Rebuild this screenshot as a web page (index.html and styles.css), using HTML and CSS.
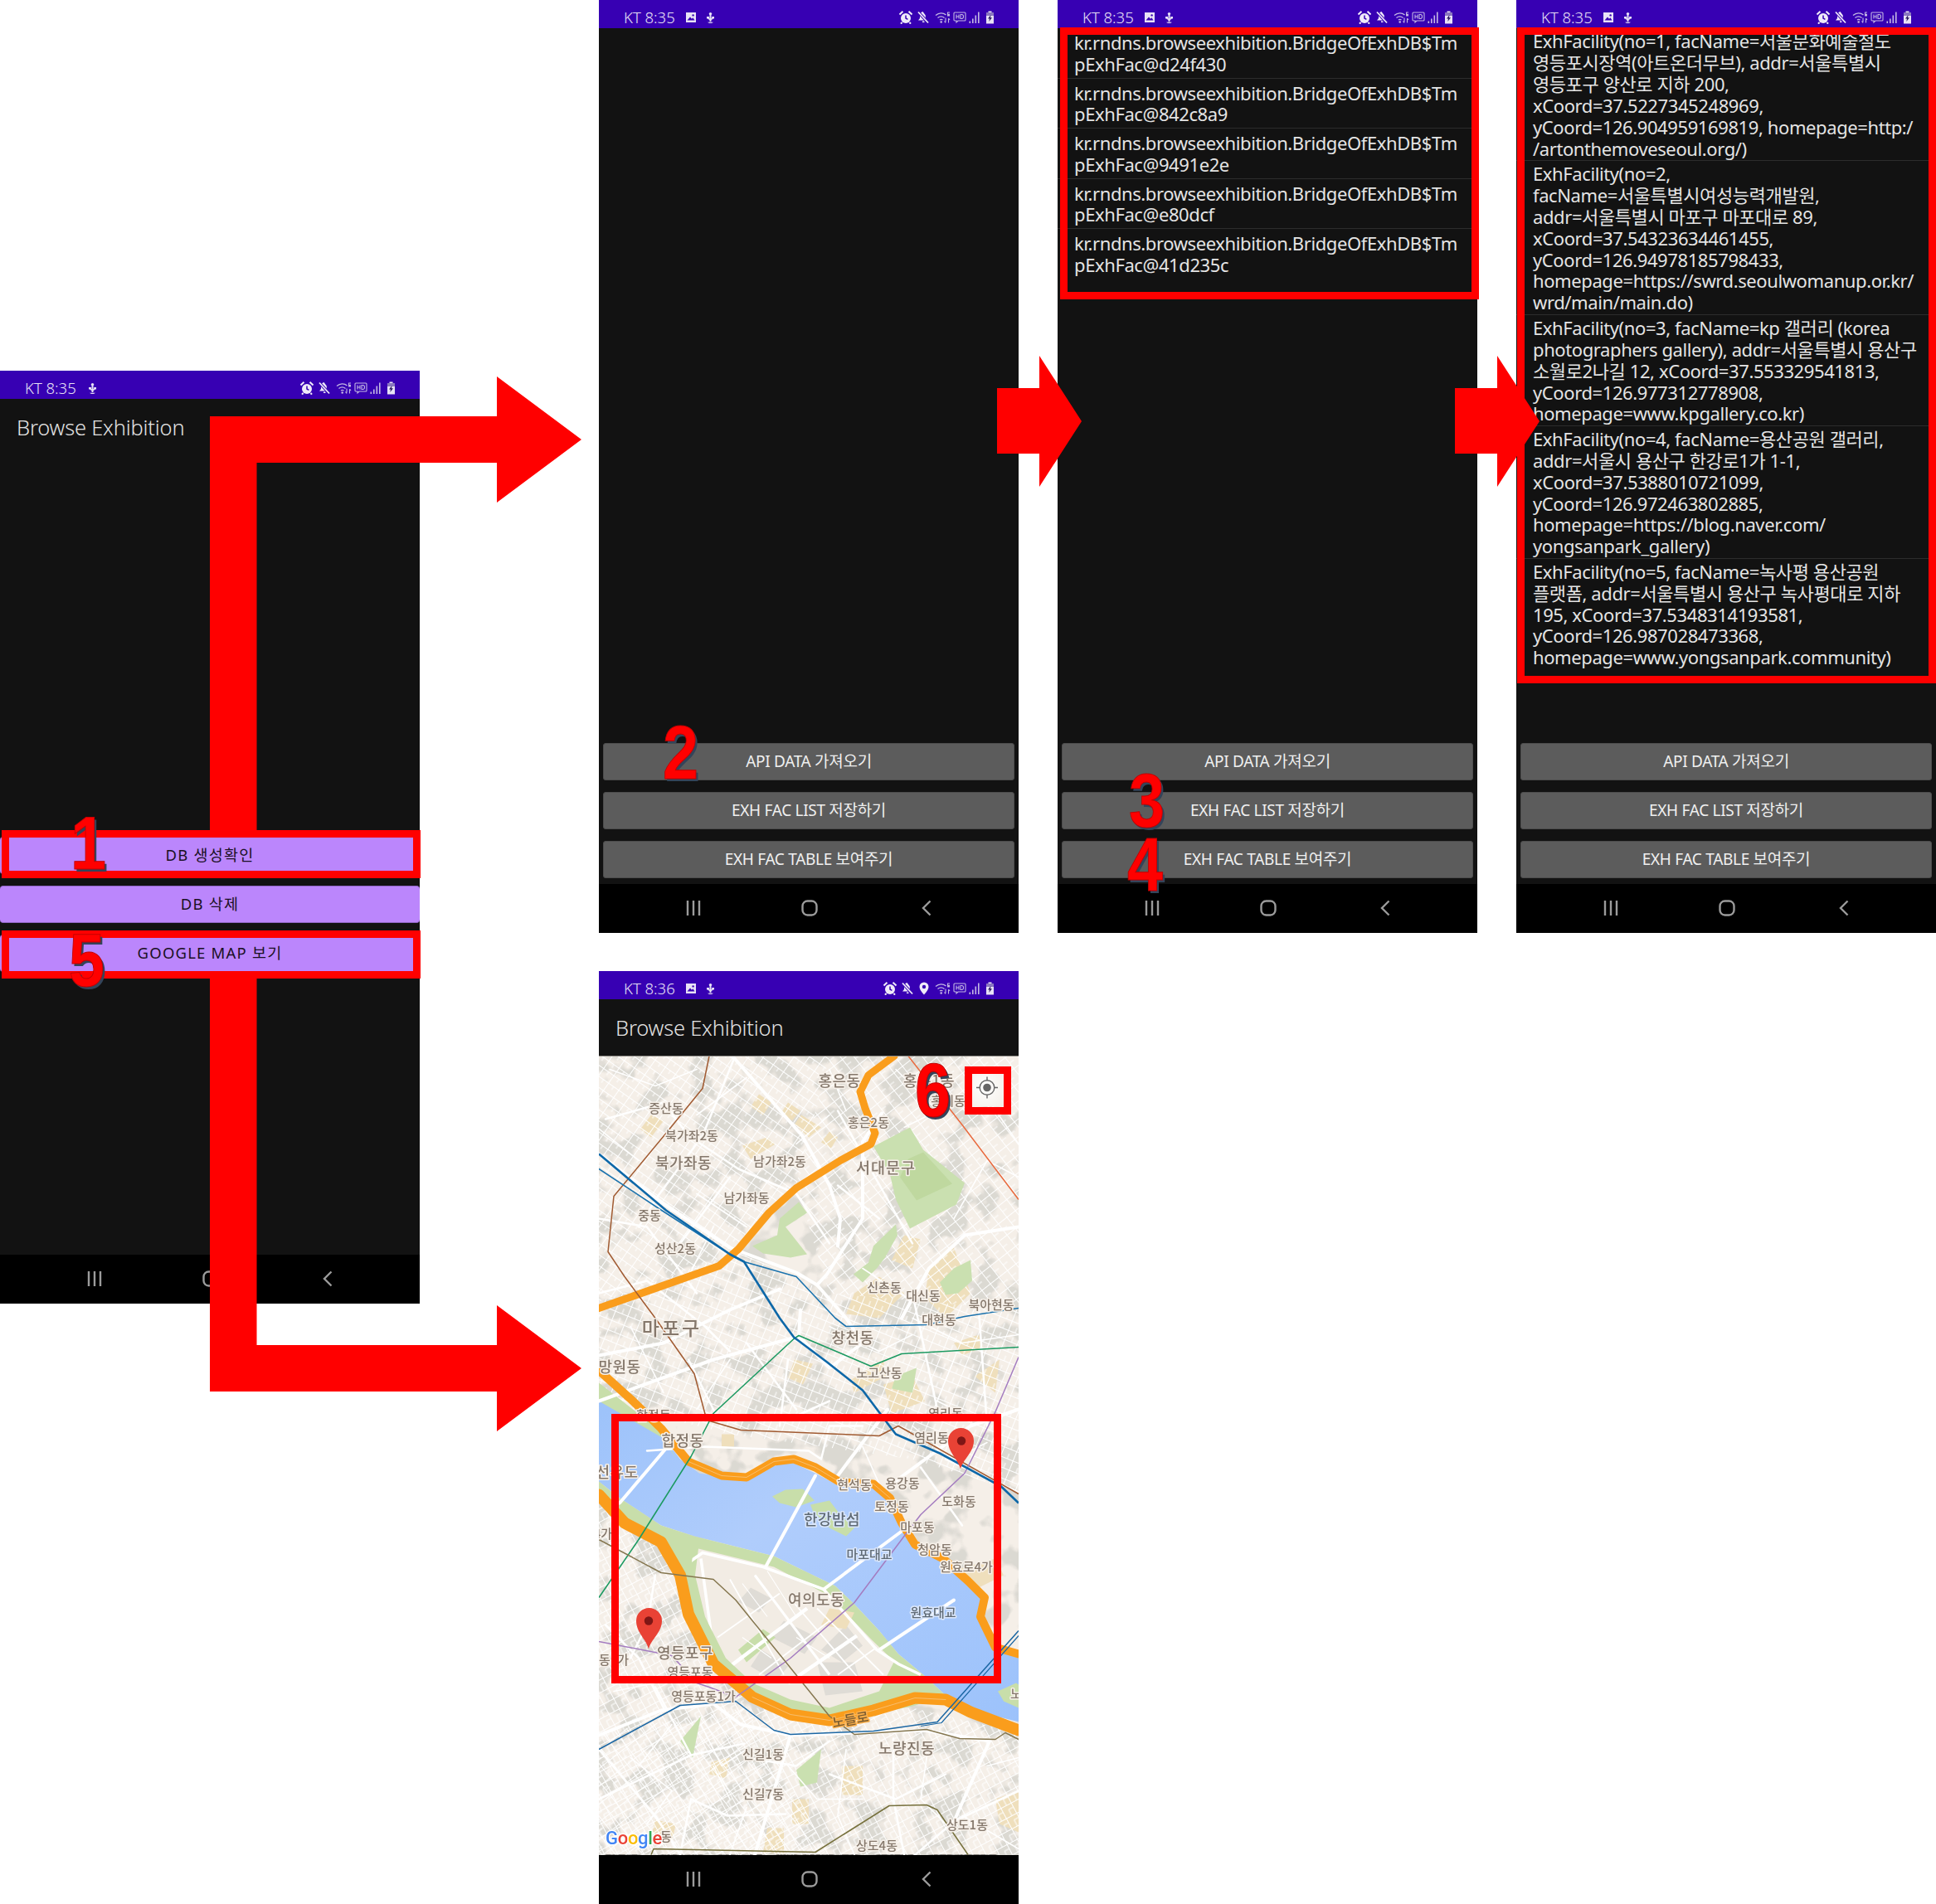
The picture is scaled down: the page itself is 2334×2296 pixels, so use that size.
FILE: index.html
```html
<!DOCTYPE html>
<html lang="ko">
<head>
<meta charset="utf-8">
<title>Browse Exhibition</title>
<link rel="stylesheet" href="styles.css">
</head>
<body>
<svg class="defs" width="0" height="0" aria-hidden="true">
  <symbol id="i-image" viewBox="0 0 14 14"><path d="M1 1h12v12H1z" fill="#e8e2f6"/><path d="M2.5 10.5 6 6.5l2 2.2 1.4-1.4 2.1 3.2z" fill="#3700b3"/><circle cx="9.6" cy="4.4" r="1.2" fill="#3700b3"/></symbol>
  <symbol id="i-usb" viewBox="0 0 13 14"><circle cx="6.5" cy="2.6" r="1.7" fill="#e8e2f6"/><path d="M5.500 3h2v9h-2z" fill="#e8e2f6"/><path d="M3.500 6.500c0 2 1.500 2.500 3 3.200 1.500-.7 3-1.200 3-3.200" fill="none" stroke="#e8e2f6" stroke-width="1.500"/><path d="M2 6h3v2.400H2zM8.200 6H11v2.400H8.200z" fill="#e8e2f6"/><path d="M3 12.800h7c-1 .9-2 1.200-3.500 1.200S4 13.700 3 12.800z" fill="#e8e2f6"/></symbol>
  <symbol id="i-alarm" viewBox="0 0 16 16"><circle cx="8" cy="9" r="6" fill="#efeaf9"/><path d="M8 5.500V9l2.400 1.400" stroke="#3700b3" stroke-width="1.500" fill="none"/><path d="M.5 4.500 4.500.8M15.500 4.500 11.500.8M3.500 14 2 15.700M12.500 14l1.500 1.700" stroke="#efeaf9" stroke-width="2"/></symbol>
  <symbol id="i-mute" viewBox="0 0 14 16"><path d="M6.500 1c-2.500.5-3.500 2.500-3.500 5v3L1 11.500h10.500L9.800 9V5.500z" fill="#efeaf9"/><path d="M6 12.500h2.500V14H6z" fill="#efeaf9"/><path d="M1 1.500 13 14.500" stroke="#3700b3" stroke-width="3.400"/><path d="M1 1.500 13 14.500" stroke="#efeaf9" stroke-width="1.800"/></symbol>
  <symbol id="i-pin" viewBox="0 0 12 16"><path d="M6 .5a5.500 5.500 0 0 0-5.500 5.500C.5 10 6 15.500 6 15.500S11.500 10 11.500 6A5.500 5.500 0 0 0 6 .5z" fill="#efeaf9"/><circle cx="6" cy="6" r="2.200" fill="#3700b3"/></symbol>
  <symbol id="i-wifi" viewBox="0 0 20 16"><g fill="none" stroke="#c4b8e4" stroke-width="1.300"><path d="M1 5.500C5 2 10 2 13.500 5"/><path d="M3.500 8.500c2.500-2 5.500-2 8 0"/><path d="M6 11c1-.8 2.500-.8 3.500 0"/></g><circle cx="7.700" cy="13.500" r="1.300" fill="#c4b8e4"/><path d="M13 8.500v5M13 14.500l-1.500-2M16.500 14.500v-5M16.500 9l1.500 2" stroke="#c4b8e4" stroke-width="1.100" fill="none"/><path d="M15 1.500h3v.9h-2v1.300h2v2.800h-3z" fill="#c4b8e4"/></symbol>
  <symbol id="i-hd" viewBox="0 0 16 16"><path d="M2 2h12a1 1 0 0 1 1 1v8a1 1 0 0 1-1 1H6l-2 2v-2H2a1 1 0 0 1-1-1V3a1 1 0 0 1 1-1z" fill="none" stroke="#c4b8e4" stroke-width="1.100"/><path d="M4 4.500v5M7 4.500v5M4 7h3M9 4.500v5h1.500c1.300 0 2-1 2-2.500s-.7-2.500-2-2.500z" fill="none" stroke="#c4b8e4" stroke-width="1.100"/></symbol>
  <symbol id="i-signal" viewBox="0 0 13 16"><path d="M.5 12.500h1.600v2.500H.5zM4 9.500h1.600V15H4zM7.500 5.500h1.600V15H7.500zM11 1.500h1.600V15H11z" fill="#c4b8e4"/></symbol>
  <symbol id="i-battery" viewBox="0 0 11 16"><path d="M3.500.5h4v1.500h2.500v13.500H1V2h2.500z" fill="#e8e2f6"/><path d="M1 2h9v4H1z" fill="#8a78c0"/><path d="M6.500 5 3 9.500h2L4.300 13l3.700-4.700H6z" fill="#2a1a60"/></symbol>
  <symbol id="i-menu" viewBox="0 0 18 20"><path d="M2 1v18M9 1v18M16 1v18" stroke="#9b9b9b" stroke-width="2.400" fill="none"/></symbol>
  <symbol id="i-home" viewBox="0 0 20 20"><rect x="1.500" y="1.500" width="17" height="17" rx="6" fill="none" stroke="#9b9b9b" stroke-width="2.400"/></symbol>
  <symbol id="i-back" viewBox="0 0 12 20"><path d="M10.500 1.500 2 10l8.500 8.500" fill="none" stroke="#9b9b9b" stroke-width="2.400"/></symbol>
</svg>

<main class="canvas">
  <section class="phone phone-main">
    <header class="status">
      <span class="clock">KT 8:35</span>
      <svg class="ic ic-usb"><use href="#i-usb"/></svg>
      <div class="status-right">
        <svg class="ic ic-alarm"><use href="#i-alarm"/></svg>
        <svg class="ic ic-mute"><use href="#i-mute"/></svg>
        <svg class="ic ic-wifi"><use href="#i-wifi"/></svg>
        <svg class="ic ic-hd"><use href="#i-hd"/></svg>
        <svg class="ic ic-signal"><use href="#i-signal"/></svg>
        <svg class="ic ic-battery"><use href="#i-battery"/></svg>
      </div>
    </header>
    <div class="appbar">Browse Exhibition</div>
    <div class="content content-main">
      <button class="btn btn-purple">DB 생성확인</button>
      <button class="btn btn-purple">DB 삭제</button>
      <button class="btn btn-purple">GOOGLE MAP 보기</button>
    </div>
    <nav class="navbar">
      <svg class="nav-ic nav-menu"><use href="#i-menu"/></svg>
      <svg class="nav-ic nav-home"><use href="#i-home"/></svg>
      <svg class="nav-ic nav-back"><use href="#i-back"/></svg>
    </nav>
  </section>

  <section class="phone">
    <header class="status">
      <span class="clock">KT 8:35</span>
      <svg class="ic ic-image"><use href="#i-image"/></svg>
      <svg class="ic ic-usb"><use href="#i-usb"/></svg>
      <div class="status-right">
        <svg class="ic ic-alarm"><use href="#i-alarm"/></svg>
        <svg class="ic ic-mute"><use href="#i-mute"/></svg>
        <svg class="ic ic-wifi"><use href="#i-wifi"/></svg>
        <svg class="ic ic-hd"><use href="#i-hd"/></svg>
        <svg class="ic ic-signal"><use href="#i-signal"/></svg>
        <svg class="ic ic-battery"><use href="#i-battery"/></svg>
      </div>
    </header>
    <div class="content content-list">
      <div class="actions">
        <button class="btn btn-grey">API DATA 가져오기</button>
        <button class="btn btn-grey">EXH FAC LIST 저장하기</button>
        <button class="btn btn-grey">EXH FAC TABLE 보여주기</button>
      </div>
    </div>
    <nav class="navbar">
      <svg class="nav-ic nav-menu"><use href="#i-menu"/></svg>
      <svg class="nav-ic nav-home"><use href="#i-home"/></svg>
      <svg class="nav-ic nav-back"><use href="#i-back"/></svg>
    </nav>
  </section>

  <section class="phone">
    <header class="status">
      <span class="clock">KT 8:35</span>
      <svg class="ic ic-image"><use href="#i-image"/></svg>
      <svg class="ic ic-usb"><use href="#i-usb"/></svg>
      <div class="status-right">
        <svg class="ic ic-alarm"><use href="#i-alarm"/></svg>
        <svg class="ic ic-mute"><use href="#i-mute"/></svg>
        <svg class="ic ic-wifi"><use href="#i-wifi"/></svg>
        <svg class="ic ic-hd"><use href="#i-hd"/></svg>
        <svg class="ic ic-signal"><use href="#i-signal"/></svg>
        <svg class="ic ic-battery"><use href="#i-battery"/></svg>
      </div>
    </header>
    <div class="content content-list">
      <ul class="rows rows-short">
        <li>kr.rndns.browseexhibition.BridgeOfExhDB$Tm<br>pExhFac@d24f430</li>
        <li>kr.rndns.browseexhibition.BridgeOfExhDB$Tm<br>pExhFac@842c8a9</li>
        <li>kr.rndns.browseexhibition.BridgeOfExhDB$Tm<br>pExhFac@9491e2e</li>
        <li>kr.rndns.browseexhibition.BridgeOfExhDB$Tm<br>pExhFac@e80dcf</li>
        <li>kr.rndns.browseexhibition.BridgeOfExhDB$Tm<br>pExhFac@41d235c</li>
      </ul>
      <div class="actions">
        <button class="btn btn-grey">API DATA 가져오기</button>
        <button class="btn btn-grey">EXH FAC LIST 저장하기</button>
        <button class="btn btn-grey">EXH FAC TABLE 보여주기</button>
      </div>
    </div>
    <nav class="navbar">
      <svg class="nav-ic nav-menu"><use href="#i-menu"/></svg>
      <svg class="nav-ic nav-home"><use href="#i-home"/></svg>
      <svg class="nav-ic nav-back"><use href="#i-back"/></svg>
    </nav>
  </section>

  <section class="phone">
    <header class="status">
      <span class="clock">KT 8:35</span>
      <svg class="ic ic-image"><use href="#i-image"/></svg>
      <svg class="ic ic-usb"><use href="#i-usb"/></svg>
      <div class="status-right">
        <svg class="ic ic-alarm"><use href="#i-alarm"/></svg>
        <svg class="ic ic-mute"><use href="#i-mute"/></svg>
        <svg class="ic ic-wifi"><use href="#i-wifi"/></svg>
        <svg class="ic ic-hd"><use href="#i-hd"/></svg>
        <svg class="ic ic-signal"><use href="#i-signal"/></svg>
        <svg class="ic ic-battery"><use href="#i-battery"/></svg>
      </div>
    </header>
    <div class="content content-list">
      <ul class="rows rows-long">
        <li>ExhFacility(no=1, facName=서울문화예술철도<br>영등포시장역(아트온더무브), addr=서울특별시<br>영등포구 양산로 지하 200,<br>xCoord=37.5227345248969,<br>yCoord=126.904959169819, homepage=http:/<br>/artonthemoveseoul.org/)</li>
        <li>ExhFacility(no=2,<br>facName=서울특별시여성능력개발원,<br>addr=서울특별시 마포구 마포대로 89,<br>xCoord=37.54323634461455,<br>yCoord=126.94978185798433,<br>homepage=https://swrd.seoulwomanup.or.kr/<br>wrd/main/main.do)</li>
        <li>ExhFacility(no=3, facName=kp 갤러리 (korea<br>photographers gallery), addr=서울특별시 용산구<br>소월로2나길 12, xCoord=37.553329541813,<br>yCoord=126.977312778908,<br>homepage=www.kpgallery.co.kr)</li>
        <li>ExhFacility(no=4, facName=용산공원 갤러리,<br>addr=서울시 용산구 한강로1가 1-1,<br>xCoord=37.5388010721099,<br>yCoord=126.972463802885,<br>homepage=https://blog.naver.com/<br>yongsanpark_gallery)</li>
        <li>ExhFacility(no=5, facName=녹사평 용산공원<br>플랫폼, addr=서울특별시 용산구 녹사평대로 지하<br>195, xCoord=37.5348314193581,<br>yCoord=126.987028473368,<br>homepage=www.yongsanpark.community)</li>
      </ul>
      <div class="actions">
        <button class="btn btn-grey">API DATA 가져오기</button>
        <button class="btn btn-grey">EXH FAC LIST 저장하기</button>
        <button class="btn btn-grey">EXH FAC TABLE 보여주기</button>
      </div>
    </div>
    <nav class="navbar">
      <svg class="nav-ic nav-menu"><use href="#i-menu"/></svg>
      <svg class="nav-ic nav-home"><use href="#i-home"/></svg>
      <svg class="nav-ic nav-back"><use href="#i-back"/></svg>
    </nav>
  </section>

  <section class="phone phone-map">
    <header class="status">
      <span class="clock">KT 8:36</span>
      <svg class="ic ic-image"><use href="#i-image"/></svg>
      <svg class="ic ic-usb"><use href="#i-usb"/></svg>
      <div class="status-right">
        <svg class="ic ic-alarm"><use href="#i-alarm"/></svg>
        <svg class="ic ic-mute"><use href="#i-mute"/></svg>
        <svg class="ic ic-pin"><use href="#i-pin"/></svg>
        <svg class="ic ic-wifi"><use href="#i-wifi"/></svg>
        <svg class="ic ic-hd"><use href="#i-hd"/></svg>
        <svg class="ic ic-signal"><use href="#i-signal"/></svg>
        <svg class="ic ic-battery"><use href="#i-battery"/></svg>
      </div>
    </header>
    <div class="appbar appbar-map">Browse Exhibition</div>
    <svg class="map" viewBox="722 1274 506 963" xmlns="http://www.w3.org/2000/svg">
      <defs>
        <pattern id="st1" width="15" height="11" patternUnits="userSpaceOnUse" patternTransform="rotate(35)">
          <path d="M0 .5H15M.5 0V11M8 0V5" stroke="#fff" stroke-width="1" fill="none"/>
        </pattern>
        <pattern id="st2" width="13" height="17" patternUnits="userSpaceOnUse" patternTransform="rotate(-38)">
          <path d="M0 .5H13M.5 0V17M0 9H7" stroke="#fff" stroke-width="1" fill="none"/>
        </pattern>
        <pattern id="st3" width="16" height="12" patternUnits="userSpaceOnUse" patternTransform="rotate(22)">
          <path d="M0 .5H16M.5 0V12M9 6V12" stroke="#fff" stroke-width="1" fill="none"/>
        </pattern>
        <pattern id="st4" width="14" height="14" patternUnits="userSpaceOnUse" patternTransform="rotate(62)">
          <path d="M0 .5H14M.5 0V14M6 0V7H14" stroke="#fff" stroke-width="1" fill="none"/>
        </pattern>
        <linearGradient id="water" x1="0" y1="0" x2="1" y2="1">
          <stop offset="0" stop-color="#9cc2fa"/>
          <stop offset=".4" stop-color="#b0cdfc"/>
          <stop offset="1" stop-color="#9cc2fb"/>
        </linearGradient>
        <radialGradient id="btnbg" cx=".4" cy=".4" r=".9">
          <stop offset="0" stop-color="#fff"/>
          <stop offset="1" stop-color="#f2ede6"/>
        </radialGradient>
        <filter id="urban" x="0" y="0" width="1" height="1" color-interpolation-filters="sRGB">
          <feTurbulence type="fractalNoise" baseFrequency=".03" numOctaves="3" seed="11"/>
          <feColorMatrix type="matrix" values="0 0 0 0 .86  0 0 0 0 .85  0 0 0 0 .825  9 0 0 0 -4.450"/>
        </filter>
        <filter id="soft" x="-2%" y="-2%" width="104%" height="104%"><feGaussianBlur stdDeviation=".55"/></filter>
        <clipPath id="yeouido"><path d="M838 1853 933 1877 1007 1913 1060 1967 1083 1995 1113 2020 1040 2050 1000 2060 953 2050 907 2030 875 2000 850 1950 832 1900z"/></clipPath>
      </defs>

      <g filter="url(#soft)">
      <rect x="722" y="1274" width="506" height="963" fill="#f5efe8"/>
      <rect x="722" y="1274" width="506" height="963" filter="url(#urban)"/>

      <g fill="#efdfbc">
        <path d="M785 1345 800 1352 785 1372 772 1362z"/>
        <path d="M915 1320 930 1330 920 1345 905 1335z"/>
        <path d="M950 1330 965 1340 955 1352 942 1342z"/>
        <path d="M966 1345 990 1360 975 1372 958 1356z"/>
        <path d="M1000 1365 1010 1372 1002 1385 990 1378z"/>
        <path d="M895 1382 925 1372 935 1380 905 1398z"/>
        <path d="M1090 1490 1110 1495 1100 1530 1075 1520z"/>
        <path d="M1030 1560 1060 1540 1090 1560 1060 1590 1020 1585z"/>
        <path d="M1120 1530 1150 1505 1170 1560 1140 1590 1115 1565z"/>
        <path d="M958 1640 980 1645 968 1670 950 1662z"/>
        <path d="M1065 1670 1100 1660 1115 1690 1075 1705z"/>
        <path d="M1175 1660 1205 1640 1200 1680z"/>
        <path d="M870 1730 885 1730 885 1745 870 1745z"/>
        <path d="M1025 1665 1065 1640 1068 1660 1030 1680z"/>
        <path d="M1150 1620 1180 1610 1185 1625 1160 1635z"/>
        <path d="M1130 1900 1200 1880 1210 1900 1150 1930z"/>
        <path d="M955 2170 975 2170 975 2200 955 2200z"/>
        <path d="M1015 2130 1040 2130 1040 2165 1015 2165z"/>
        <path d="M925 2205 945 2205 945 2235 920 2235z"/>
        <path d="M1200 2170 1228 2160 1228 2210 1205 2200z"/>
        <path d="M858 2125 880 2120 875 2145 855 2140z"/>
        <path d="M790 2195 815 2200 810 2220 785 2215z"/>
      </g>
      <path d="M722 1274H1000L960 1430 890 1510 722 1570z" fill="url(#st1)"/>
      <path d="M1000 1274H1228V1580L1000 1560 960 1430z" fill="url(#st2)"/>
      <path d="M722 1570 890 1510 1000 1560 1228 1580V1800L1100 1760 880 1730 722 1690z" fill="url(#st3)"/>
      <path d="M722 1800 840 1900 900 2060 1100 2060 1228 2090V2237H722z" fill="url(#st4)"/>
      <path d="M722 2090 900 2060 1000 2237H722z" fill="url(#st2)"/>

      <g fill="#cae0b0">
        <path d="M1053 1383 1097 1360 1113 1387 1163 1427 1153 1453 1097 1482 1080 1447 1073 1417z"/>
        <path d="M907 1503 937 1490 940 1470 963 1450 973 1463 947 1480 973 1513 953 1517 920 1512z"/>
        <path d="M1029 1537 1047 1523 1053 1503 1080 1477 1082 1490 1067 1517 1057 1530 1040 1547z"/>
        <path d="M1133 1547 1150 1530 1170 1520 1172 1545 1155 1560 1140 1562z"/>
        <path d="M1080 1660 1105 1650 1100 1680 1075 1675z"/>
        <path d="M820 2100 845 2070 835 2120z"/>
        <path d="M960 2135 990 2110 985 2150 965 2155z"/>
      </g>
      <path d="M1095 1398 1113 1390 1148 1428 1105 1448 1085 1420z" fill="#bfd89f"/>

      <path d="M722 1680 763 1703 797 1730 820 1760 843 1777 897 1785 927 1770 953 1763 983 1777 1013 1793 1053 1793 1073 1810 1087 1840 1103 1867 1137 1883 1167 1910 1185 1930 1183 1950 1200 1987 1228 2000 1228 2077 1170 2062 1140 2045 1113 2020 1083 1995 1060 1967 1030 1935 1007 1913 933 1877 837 1853 797 1840 747 1807 722 1787z" fill="url(#water)"/>

      <path d="M722 1787 747 1807 797 1840 837 1853 933 1877 1007 1913 1030 1935 1060 1967 1083 1995 1113 2020 1140 2045 1100 2058 1000 2078 950 2070 905 2050 862 2010 840 1960 825 1905 800 1860 750 1835 722 1812z" fill="#c8deaa"/>
      <path d="M722 1668 763 1700 797 1726 815 1760 800 1735 760 1712 722 1690z" fill="#c8deaa"/>
      <path d="M842 1868 933 1890 1000 1925 1050 1977 1078 2004 1060 2040 1000 2060 953 2050 907 2030 875 2000 850 1950 838 1900z" fill="#f2ece4"/>
      <g clip-path="url(#yeouido)">
        <path d="M905 1915 930 1928 915 1945 890 1932z M945 1955 985 1975 970 1995 930 1975z M918 1990 950 2010 935 2028 905 2010z M985 2005 1030 2005 1040 2040 995 2045z M1020 1960 1040 1985 1015 2005 990 1990z" fill="#dfdcd6"/>
        <path d="M890 1990 920 1965 935 1975 900 2005z" fill="#c8deaa"/>
        <path d="M1000 1940 1030 1945 1020 1965 990 1960z" fill="#efdfbc"/>
        <g stroke="#fff" fill="none">
          <path d="M973 1940 880 2010M1033 1973 950 2030" stroke-width="4.500"/>
          <path d="M827 1887 847 1873 920 1890 993 1917 1057 1990 1083 2007 1110 2020M845 1880 860 1990 880 2020" stroke-width="3.500"/>
          <path d="M910 1900 1000 2020" stroke-width="3"/>
          <path d="M880 1905 945 2020M950 1925 1040 2030M985 1940 1065 2020M1000 1955 915 2020M940 1922 865 1975M1057 1987 1010 2020" stroke-width="1.800"/>
          <path d="M895 1910 925 1950M925 1895 960 1950M960 1975 1000 2000M895 1975 930 2000" stroke-width="1.100"/>
        </g>
      </g>

      <g fill="#c8deaa">
        <path d="M931 1805 947 1797 968 1796 982 1810 960 1818 940 1813z"/>
        <path d="M977 1815 1000 1810 1013 1827 1030 1843 1020 1853 1000 1843 980 1823z"/>
        <path d="M1203 2040 1225 2030 1228 2032 1228 2060 1210 2052z"/>
      </g>

      <g fill="none" stroke="#fff" stroke-linecap="round" stroke-linejoin="round">
        <g stroke-width="4">
          <path d="M722 1392 800 1452 880 1505 960 1535 985 1550 1020 1590 1040 1620"/>
          <path d="M883 1274 967 1370 1000 1430 1013 1470 1010 1503"/>
          <path d="M1063 1343 1040 1377 1040 1470 997 1537 985 1550"/>
          <path d="M1228 1480 1163 1490 1120 1530 1087 1590"/>
          <path d="M965 1580 963 1612 1000 1650 1040 1620"/>
          <path d="M722 1690 860 1640 963 1612"/>
          <path d="M722 1635 800 1620 880 1580 940 1555"/>
          <path d="M803 1747 747 1813"/>
          <path d="M983 1780 923 1890"/>
          <path d="M1087 1847 993 1917"/>
          <path d="M1150 1930 1060 1990"/>
          <path d="M722 2093 797 2063 860 2055 893 2080 953 2093 1113 2087 1193 2100"/>
          <path d="M953 2093 910 2237"/>
          <path d="M1193 2100 1150 2197"/>
          <path d="M1070 1700 1010 1780"/>
          <path d="M1075 1790 1170 1720 1228 1700"/>
        </g>
        <g stroke-width="2.500">
          <path d="M885 1277 847 1370 793 1443 770 1480"/>
          <path d="M730 1350 800 1330 830 1370 890 1410 960 1440 1000 1500"/>
          <path d="M722 1470 780 1480 840 1560"/>
          <path d="M722 1560 780 1545 850 1600 880 1630"/>
          <path d="M1077 2097 1077 2170 1090 2237"/>
          <path d="M722 2170 833 2117 897 2103"/>
          <path d="M833 2170 877 2190 947 2188"/>
          <path d="M722 2110 790 2190 820 2237"/>
          <path d="M833 2170 820 2237"/>
          <path d="M833 2117 790 2035"/>
          <path d="M760 2000 780 1960 790 1900"/>
          <path d="M800 2060 770 2000 730 1960"/>
          <path d="M1010 1340 1100 1500"/>
          <path d="M1100 1560 1130 1700"/>
          <path d="M1180 1580 1190 1720"/>
          <path d="M950 1640 940 1720"/>
          <path d="M1000 2140 1080 2170 1140 2140"/>
          <path d="M900 2120 960 2130 1000 2100"/>
          <path d="M1228 2160 1150 2197 1100 2240"/>
          <path d="M1010 1430 1060 1470"/>
          <path d="M880 1420 820 1500"/>
          <path d="M830 1640 870 1720"/>
          <path d="M900 1620 960 1700"/>
          <path d="M1110 1770 1160 1840"/>
          <path d="M1140 1760 1228 1800"/>
          <path d="M780 1750 850 1745 975 1750 990 1760 1000 1720 1040 1720"/>
          <path d="M852 1713 960 1708 1000 1690"/>
        </g>
        <g stroke-width="1.600">
          <path d="M735 1290 790 1310 840 1290M770 1400 720 1360M840 1440 900 1480M860 1480 830 1540"/>
          <path d="M1080 1290 1130 1340 1090 1360M1180 1310 1228 1380M1150 1470 1190 1400 1228 1420"/>
          <path d="M1040 1530 1100 1570M1100 1590 1160 1620 1228 1610M1000 1600 1060 1630 1100 1610"/>
          <path d="M760 1600 800 1680M880 1640 840 1700M1150 1640 1130 1690 1170 1710"/>
          <path d="M1100 1720 1150 1760 1190 1740M1040 1745 1060 1790"/>
          <path d="M1000 1290 1020 1340M960 1380 1000 1345M900 1300 840 1345"/>
          <path d="M760 2120 810 2160 780 2200M860 2130 880 2170M900 2180 880 2237M950 2130 985 2170 1040 2170"/>
          <path d="M1020 2110 1010 2190 1030 2237M1120 2100 1110 2170 1140 2200M1190 2130 1228 2120M1160 2190 1228 2230"/>
          <path d="M810 2080 770 2130M845 2080 870 2130 900 2110M740 2040 790 2030"/>
        </g>
      </g>

      <g fill="none" stroke-linecap="round" stroke-linejoin="round">
        <path d="M722 1578 867 1527 890 1507 927 1463 960 1433 1013 1400 1050 1380 1055 1367 1043 1337 1037 1317 1047 1297 1078 1274" stroke="#fa9d1c" stroke-width="9"/>
        <path d="M722 1653 763 1690 797 1723 830 1763 870 1780 900 1782 933 1763 957 1760 983 1770 1013 1788 1053 1790 1073 1807 1087 1837 1103 1863 1137 1880 1167 1907 1187 1927 1182 1950 1200 1987 1228 1995" stroke="#fa9d1c" stroke-width="10"/>
        <path d="M830 1763 870 1780 900 1782 933 1763 957 1760 983 1770 1013 1788 1053 1790 1073 1807" stroke="#f7c580" stroke-width=".8"/>
        <path d="M722 1803 753 1837 797 1860 820 1900 830 1947 860 2007 907 2047 953 2068 1000 2075 1053 2063 1103 2048 1140 2050 1170 2065 1228 2087" stroke="#fa9d1c" stroke-width="14"/>
        <path d="M907 2047 953 2068 1000 2075 1053 2063 1103 2048 1140 2050" stroke="#f7c580" stroke-width=".8"/>
      </g>

      <g fill="none" stroke-linejoin="round">
        <path d="M1095 1274 1160 1357 1228 1447" stroke="#e86a3e" stroke-width="1.500"/>
        <path d="M1228 1625 1087 1633 1050 1648 963 1611 957 1615 860 1705 833 1757 770 1857 722 1927" stroke="#1d9a62" stroke-width="1.600"/>
        <path d="M855 1274 847 1313 803 1367 740 1443 733 1510 753 1540 790 1590 837 1657 852 1713 893 1725 1060 1732 1083 1720 1228 1802" stroke="#a05a30" stroke-width="1.500"/>
        <path d="M1228 1637 1200 1703 1163 1777 1110 1827 1090 1853 1030 1933 953 2000 887 2047 855 2035 840 2030 810 1997 722 1980" stroke="#a47cc0" stroke-width="1.500"/>
        <path d="M722 1857 797 1897 860 1905 887 1930 1000 2070 1030 2092 1117 2086 1157 2097 1200 2098 1212 2090 1228 2098" stroke="#85764f" stroke-width="1.500"/>
        <path d="M785 2237 788 2230 983 2234 1072 2178 1117 2177 1130 2183 1167 2237" stroke="#76703c" stroke-width="1.500"/>
        <path d="M722 2110 820 2057 887 2052 933 2087 953 2092 1053 2088 1130 2077 1228 1967" stroke="#1a66a3" stroke-width="1.500"/>
        <path d="M1110 2082 1135 2078 1228 1973" stroke="#1a66a3" stroke-width="1.200"/>
        <path d="M722 1410 793 1457 883 1515 897 1522 960 1540 1007 1590 1020 1600 1117 1598 1163 1588 1228 1578" stroke="#1a72ad" stroke-width="1.600"/>
        <path d="M722 1392 803 1460 880 1513 897 1522 940 1590 957 1613 997 1643 1040 1677 1067 1713 1080 1730 1133 1753 1207 1793 1228 1813" stroke="#0f67a8" stroke-width="2.600"/>
      </g>

      <g class="labels">
        <text class="lb lb-m" x="1012" y="1310">홍은동</text>
        <text class="lb lb-m" x="1120" y="1310">홍은1동</text>
        <text class="lb" x="1143" y="1333">홍제동</text>
        <text class="lb" x="803" y="1342">증산동</text>
        <text class="lb" x="834" y="1375">북가좌2동</text>
        <text class="lb lb-m" x="824" y="1409">북가좌동</text>
        <text class="lb" x="940" y="1406">남가좌2동</text>
        <text class="lb" x="900" y="1450">남가좌동</text>
        <text class="lb" x="1047" y="1359">홍은2동</text>
        <text class="lb lb-l" x="1068" y="1415">서대문구</text>
        <text class="lb" x="783" y="1471">중동</text>
        <text class="lb" x="814" y="1511">성산2동</text>
        <text class="lb" x="1066" y="1558">신촌동</text>
        <text class="lb" x="1113" y="1568">대신동</text>
        <text class="lb" x="1195" y="1579">북아현동</text>
        <text class="lb" x="1132" y="1597">대현동</text>
        <text class="lb lb-xl" x="810" y="1610">마포구</text>
        <text class="lb lb-m" x="1028" y="1620">창천동</text>
        <text class="lb lb-m" x="747" y="1655">망원동</text>
        <text class="lb" x="1060" y="1661">노고산동</text>
        <text class="lb" x="788" y="1712">합정동</text>
        <text class="lb" x="1140" y="1710">염리동</text>
        <text class="lb lb-m" x="823" y="1744">합정동</text>
        <text class="lb" x="1123" y="1739">염리동</text>
        <text class="lb lb-m" x="744" y="1782">선유도</text>
        <text class="lb" x="1030" y="1796">현석동</text>
        <text class="lb" x="1088" y="1794">용강동</text>
        <text class="lb" x="1156" y="1816">도화동</text>
        <text class="lb" x="1075" y="1822">토정동</text>
        <text class="lb lb-m lb-dark" x="1003" y="1839">한강밤섬</text>
        <text class="lb" x="1106" y="1847">마포동</text>
        <text class="lb lb-dark" x="1048" y="1880">마포대교</text>
        <text class="lb" x="1127" y="1874">청암동</text>
        <text class="lb" x="1165" y="1895">원효로4가</text>
        <text class="lb" x="727" y="1855">4가</text>
        <text class="lb lb-m" x="984" y="1936">여의도동</text>
        <text class="lb lb-dark" x="1125" y="1950">원효대교</text>
        <text class="lb lb-m" x="826" y="2000">영등포구</text>
        <text class="lb" x="832" y="2022">영등포동</text>
        <text class="lb" x="848" y="2051">영등포동1가</text>
        <text class="lb" x="740" y="2007">동1가</text>
        <text class="lb lb-road" x="1025" y="2080" transform="rotate(-10 1025 2073)">노들로</text>
        <text class="lb lb-m" x="1093" y="2115">노량진동</text>
        <text class="lb" x="920" y="2121">신길1동</text>
        <text class="lb" x="920" y="2169">신길7동</text>
        <text class="lb" x="1166" y="2206">상도1동</text>
        <text class="lb" x="1057" y="2231">상도4동</text>
        <text class="lb lb-start" x="1218" y="2048">노들섬</text>
        <text class="lb" x="803" y="2220">동</text>
      </g>

      <g>
        <path d="M1158 1772c-3-12-15-20-15-34a15.500 15.500 0 0 1 31 0c0 14-13 22-16 34z" fill="#e94235"/>
        <circle cx="1159" cy="1738" r="5.200" fill="#7e1412"/>
        <path d="M782 1989c-3-12-15-20-15-34a15.500 15.500 0 0 1 31 0c0 14-13 22-16 34z" fill="#e94235"/>
        <circle cx="782" cy="1955" r="5.200" fill="#7e1412"/>
      </g>

      <text class="google" x="730" y="2224"><tspan fill="#4285f4">G</tspan><tspan fill="#ea4335">o</tspan><tspan fill="#fbbc05">o</tspan><tspan fill="#4285f4">g</tspan><tspan fill="#34a853">l</tspan><tspan fill="#ea4335">e</tspan></text>

      <rect x="1172" y="1295" width="38" height="40" fill="url(#btnbg)"/>
      <g>
        <circle cx="1190" cy="1312" r="4.800" fill="#666"/>
        <circle cx="1190" cy="1312" r="8.800" fill="none" stroke="#666" stroke-width="1.400"/>
        <path d="M1190 1299v4M1190 1321v4M1177 1312h4M1199 1312h4" stroke="#666" stroke-width="1.400"/>
      </g>
      </g>
    </svg>
    <nav class="navbar">
      <svg class="nav-ic nav-menu"><use href="#i-menu"/></svg>
      <svg class="nav-ic nav-home"><use href="#i-home"/></svg>
      <svg class="nav-ic nav-back"><use href="#i-back"/></svg>
    </nav>
  </section>

  <div class="overlay">
    <svg class="arrows" viewBox="0 0 2334 2296" aria-hidden="true">
      <path d="M253 1001V502H599V454L701 530 599 606V558H309.500V1001z" fill="#f00"/>
      <path d="M253 1180V1678H599V1726L701 1650 599 1574V1622H309.500V1180z" fill="#f00"/>
      <path d="M1202 468H1253V429L1304 508 1253 587V547H1202z" fill="#f00"/>
      <path d="M1754 468H1805V429L1856 508 1805 587V547H1754z" fill="#f00"/>
    </svg>
    <div class="mark mark-btn1"></div>
    <div class="mark mark-btn5"></div>
    <div class="mark mark-list3"></div>
    <div class="mark mark-list4"></div>
    <div class="mark mark-river"></div>
    <div class="mark mark-loc"></div>
    <span class="step step1">1</span>
    <span class="step step5">5</span>
    <span class="step step2">2</span>
    <span class="step step3">3</span>
    <span class="step step4">4</span>
    <span class="step step6">6</span>
  </div>
</main>
</body>
</html>
```

FILE: styles.css
```css
* { box-sizing: border-box; }
html, body { margin: 0; padding: 0; background: #fff; }
body { width: 2334px; height: 2296px; overflow: hidden; font-family: "Noto Sans", "Noto Sans CJK KR", sans-serif; }
.defs { position: absolute; }

.canvas {
  position: relative;
  width: 2334px;
  height: 2296px;
  display: grid;
  grid-template-columns: 722px 553px 553px 506px;
  grid-template-rows: 1125px 1171px;
  grid-template-areas: "a b c d" "a e . .";
  align-items: start;
}
.phone {
  width: 506px;
  height: 1125px;
  background: #121212;
  display: flex;
  flex-direction: column;
  overflow: hidden;
}
.phone:nth-child(2) { grid-area: b; }
.phone:nth-child(3) { grid-area: c; }
.phone:nth-child(4) { grid-area: d; }
.phone-main { grid-area: a; margin-top: 447px; }
.phone-map { grid-area: e; margin-top: 46px; }

.status {
  flex: 0 0 34px;
  height: 34px;
  background: #3700b3;
  display: flex;
  align-items: center;
  padding: 7px 29px 0 30px;
  color: #e8e2f6;
}
.clock {
  width: 66px;
  font-size: 18.5px;
  line-height: 27px;
  font-family: "Noto Sans", sans-serif;
  font-weight: 300;
  white-space: nowrap;
}
.ic { display: block; flex: none; }
.ic-image { width: 14px; height: 14px; margin-left: 8px; }
.ic-usb { width: 13px; height: 14px; margin-left: 10px; }
.phone-main .ic-usb { margin-left: 9px; }
.status-right { margin-left: auto; display: flex; align-items: center; }
.ic-alarm { width: 16px; height: 16px; }
.ic-mute { width: 14px; height: 16px; margin-left: 6px; }
.ic-pin { width: 12px; height: 16px; margin-left: 7px; }
.ic-wifi { width: 20px; height: 16px; margin-left: 7px; }
.ic-hd { width: 16px; height: 16px; margin-left: 2px; }
.ic-signal { width: 13px; height: 16px; margin-left: 3px; }
.ic-battery { width: 11px; height: 16px; margin-left: 7px; }

.appbar {
  flex: 0 0 68px;
  height: 68px;
  padding: 0 20px;
  display: flex;
  align-items: center;
  color: #e2e2e2;
  font-size: 25.5px;
  font-weight: 300;
  letter-spacing: -0.2px;
  white-space: nowrap;
}
.appbar-map { box-shadow: 0 1px 0 #8d8a85; position: relative; }

.content { flex: 1; min-height: 0; display: flex; flex-direction: column; }
.content-main { padding-top: 460px; gap: 14px; }
.content-list { justify-content: flex-end; }

.btn {
  display: block;
  width: 100%;
  height: 45px;
  margin: 0;
  padding: 0 0 3px;
  border-radius: 4px;
  text-align: center;
  font-family: "Noto Sans", "Noto Sans CJK KR", sans-serif;
  white-space: nowrap;
  cursor: pointer;
}
.btn-purple {
  background: #bb86fc;
  border: 0;
  border-top: 1px solid #8f66c4;
  border-bottom: 1px solid #8f66c4;
  color: #1a1024;
  font-size: 18.5px;
  letter-spacing: 1.200px;
}
.actions {
  flex: none;
  margin-top: auto;
  padding: 0 5px 7px;
  display: flex;
  flex-direction: column;
  gap: 14px;
}
.btn-grey {
  background: #5c5c5c;
  border: 1px solid #4d4d4d;
  border-radius: 3px;
  color: #efefef;
  font-size: 19px;
  letter-spacing: -0.3px;
}

.rows { list-style: none; margin: 0; padding: 0; flex: none; }
.rows li {
  padding: 0 8px 0 20px;
  color: #e4e4e4;
  font-size: 22px;
  line-height: 25.9px;
  white-space: nowrap;
  border-bottom: 1px solid #2c2c2c;
  letter-spacing: -0.4px;
}
.rows-short li { padding-top: 5px; padding-bottom: 2.700px; }
.rows-short li:last-child { border-bottom: 0; }
.rows-long li { padding-top: 3px; padding-bottom: .5px; }
.rows-long li:last-child { border-bottom: 0; }

.map { flex: 1; min-height: 0; display: block; width: 506px; height: 963px; }
.lb {
  font-family: "Noto Sans CJK KR", "Noto Sans", sans-serif;
  font-size: 15px;
  font-weight: 500;
  fill: #85786c;
  stroke: #f7f1ea;
  stroke-width: 3px;
  stroke-linejoin: round;
  paint-order: stroke;
  text-anchor: middle;
}
.lb-m { font-size: 18px; letter-spacing: .5px; }
.lb-l { font-size: 18.5px; letter-spacing: 1px; }
.lb-xl { font-size: 23px; letter-spacing: 3px; }
.lb-start { text-anchor: start; }
.lb-dark { fill: #5f6a74; stroke: #dbe7fb; }
.lb-road { font-size: 16px; fill: #7a5c30; stroke: #fbb04c; }
.google {
  font-family: "Roboto", "Liberation Sans", sans-serif;
  font-size: 22px;
  font-weight: 500;
  letter-spacing: -.3px;
  stroke: #fff;
  stroke-width: 2.500px;
  paint-order: stroke;
}

.navbar {
  flex: 0 0 59px;
  height: 59px;
  background: #000;
  display: grid;
  grid-template-columns: repeat(3, 1fr);
  align-items: center;
  justify-items: center;
  padding: 0 41px 2px 44px;
}
.nav-ic { display: block; height: 20px; }
.nav-menu { width: 18px; }
.nav-home { width: 20px; }
.nav-back { width: 12px; }

.overlay { position: absolute; inset: 0; pointer-events: none; }
.arrows { position: absolute; left: 0; top: 0; width: 2334px; height: 2296px; }
.mark { position: absolute; border: 9px solid #f00; }
.mark-btn1 { left: 2px; top: 1001px; width: 505px; height: 58px; }
.mark-btn5 { left: 2px; top: 1122px; width: 505px; height: 58px; }
.mark-list3 { left: 1278px; top: 33px; width: 505px; height: 328px; }
.mark-list4 { left: 1829px; top: 33px; width: 505px; height: 791px; }
.mark-river { left: 737px; top: 1705px; width: 470px; height: 325px; }
.mark-loc { left: 1163px; top: 1286px; width: 56px; height: 58px; }

.step {
  position: absolute;
  font-family: "Liberation Sans", sans-serif;
  font-weight: 700;
  font-size: 90px;
  line-height: 90px;
  color: #f00;
  -webkit-text-stroke: 1px #c40000;
  text-shadow: 3px 3px 0 #34445a;
  transform: scaleX(.86);
  transform-origin: left top;
}
.step1 { left: 85px; top: 972px; }
.step5 { left: 83px; top: 1113px; }
.step2 { left: 799px; top: 863px; }
.step3 { left: 1361px; top: 921px; }
.step4 { left: 1359px; top: 998px; }
.step6 { left: 1103px; top: 1270px; }
```
